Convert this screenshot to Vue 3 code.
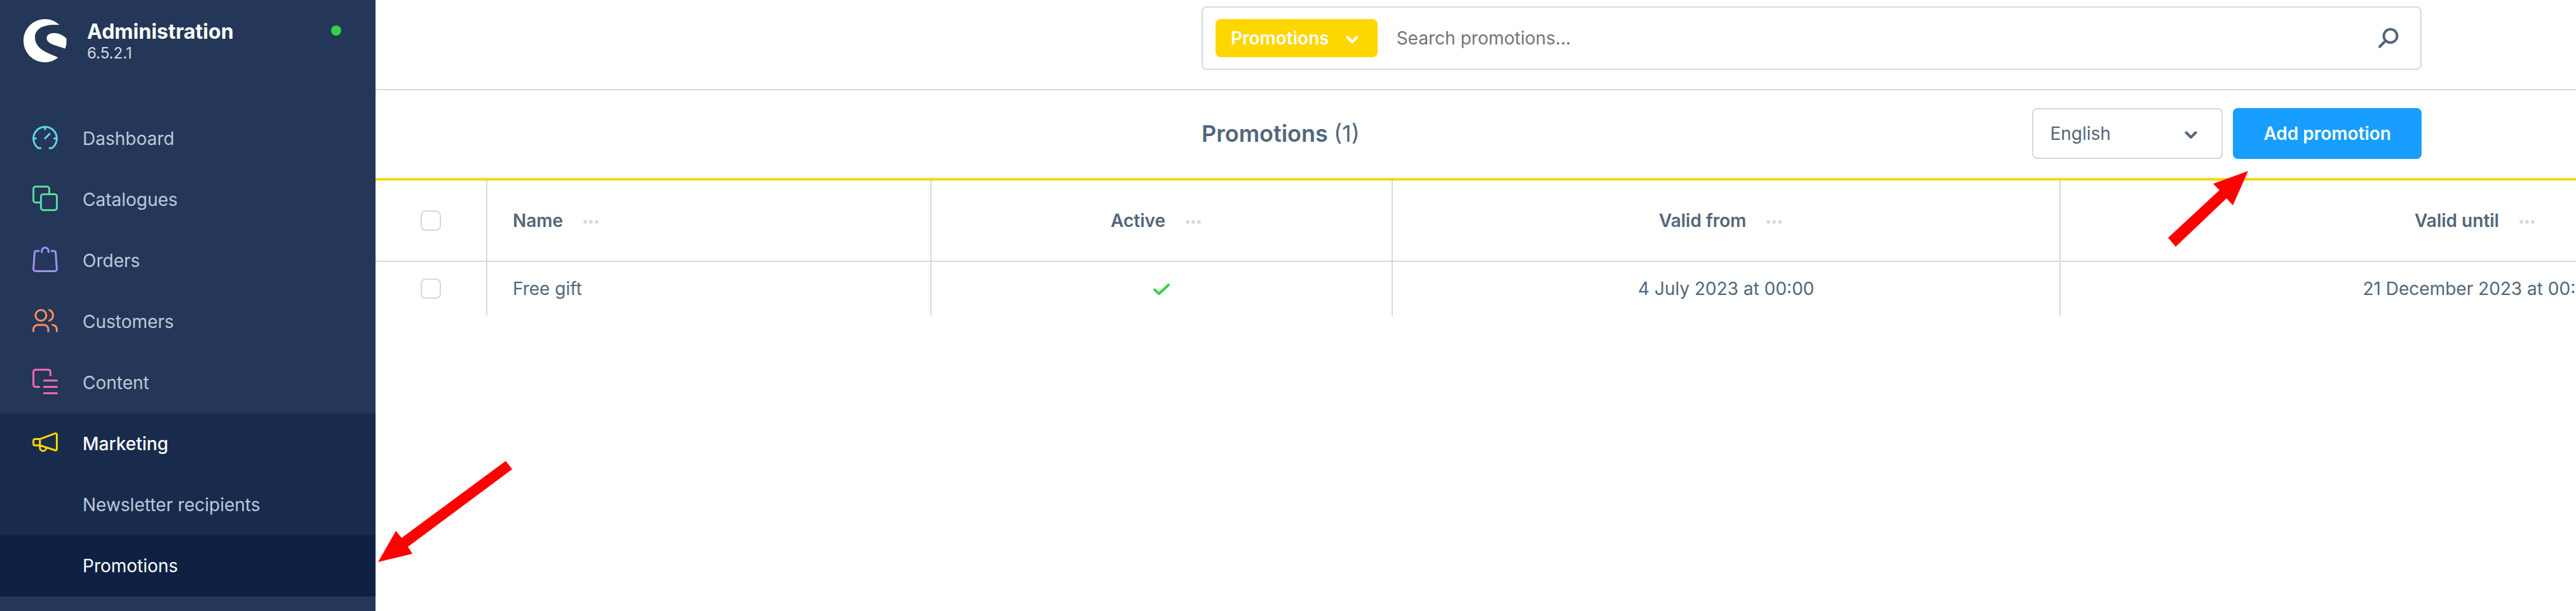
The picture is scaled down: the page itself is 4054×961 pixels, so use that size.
<script setup>
const nav = [
  { id: 'dashboard', label: 'Dashboard' },
  { id: 'catalogues', label: 'Catalogues' },
  { id: 'orders', label: 'Orders' },
  { id: 'customers', label: 'Customers' },
  { id: 'content', label: 'Content' },
]
const columns = [
  { id: 'name', label: 'Name' },
  { id: 'active', label: 'Active' },
  { id: 'from', label: 'Valid from' },
  { id: 'until', label: 'Valid until' },
]
const rows = [
  { name: 'Free gift', from: '4 July 2023 at 00:00', until: '21 December 2023 at 00:00' },
]
</script>

<template>
  <div class="app">
    <aside class="sidebar">
      <header class="brand">
        <svg class="logo" viewBox="0 0 68 68" aria-hidden="true">
          <path fill="#fff" d="M56.500 9.300C50 3 42 0 34 0C15 0 0 15 0 34C0 53 15 68 34 68C42 68 49 65 54.500 60.500C42 54 18 49 18 28.500C18 15 32 7 56.500 9.300Z" />
          <path fill="#fff" d="M67.500 30.500C62 25 55 22 48 22C41 22 36.500 25 36.500 30C36.500 39 50 41 65.500 46.500C67.500 42 68 36 67.500 30.500Z" />
        </svg>
        <div class="brand-text">
          <span class="brand-name">Administration</span>
          <span class="brand-version">6.5.2.1</span>
        </div>
        <span class="status"></span>
      </header>

      <nav class="nav">
        <a v-for="item in nav" :key="item.id" class="nav-item" href="#">
          <svg class="nav-icon" :class="item.id" viewBox="0 0 40 40" aria-hidden="true">
            <template v-if="item.id === 'dashboard'">
              <path d="M13 37H9.500A18.400 18.400 0 1 1 30.500 37H27M20 3.500V7.500M2 21.700H5.500M38 21.700H34.500M20 21.500L27 14.500" />
            </template>
            <template v-else-if="item.id === 'catalogues'">
              <path d="M13 26.500H5A3.400 3.400 0 0 1 1.600 23V5A3.400 3.400 0 0 1 5 1.600H23A3.400 3.400 0 0 1 26.500 5V13" />
              <rect x="13.500" y="13.500" width="25" height="25" rx="3.400" />
            </template>
            <template v-else-if="item.id === 'orders'">
              <path d="M10 6.800H6.500A3 3 0 0 0 3.400 9.500L1.600 35A3.300 3.300 0 0 0 5 38.400H35A3.300 3.300 0 0 0 38.400 35L36.600 9.500A3 3 0 0 0 33.500 6.800H30M14.800 8.500V6.500A5 5 0 0 1 19.500 1.600H20.500A5 5 0 0 1 25.200 6.500V8.500" />
            </template>
            <template v-else-if="item.id === 'customers'">
              <circle cx="13.400" cy="12" r="8.500" />
              <path d="M26.600 3.600A9 9 0 0 1 26.600 20.400M1.600 37V34A7 7 0 0 1 8.500 27H18A7 7 0 0 1 25 34V37M31.500 27A7 7 0 0 1 38.400 34V37" />
            </template>
            <template v-else>
              <path d="M10.500 28.400H5A3.400 3.400 0 0 1 1.600 25V5A3.400 3.400 0 0 1 5 1.600H25A3.400 3.400 0 0 1 28.400 5V10.500M18.500 18.400H38.400M18.500 28.400H38.400M18.500 38.400H38.400" />
            </template>
          </svg>
          <span>{{ item.label }}</span>
        </a>
        <div class="nav-group">
          <a class="nav-item open" href="#">
            <svg class="nav-icon marketing" viewBox="0 0 40 40" aria-hidden="true">
              <path d="M11.800 14.600L36 5.700A1.800 1.800 0 0 1 38.400 7.400V30.600A1.800 1.800 0 0 1 36 32.300L11.800 24.400ZM11.800 14.600H4A2.400 2.400 0 0 0 1.600 17V22A2.400 2.400 0 0 0 4 24.400H11.800M11.800 25V28A5 5 0 0 0 21.800 28.500" />
            </svg>
            <span>Marketing</span>
          </a>
          <a class="nav-item sub" href="#">Newsletter recipients</a>
          <a class="nav-item sub current" href="#">Promotions</a>
        </div>
      </nav>
    </aside>

    <main class="main">
      <header class="topbar band">
        <div class="search">
          <button class="search-type" type="button">
            Promotions
            <svg class="chevron" viewBox="0 0 20 12" aria-hidden="true"><path d="M2.500 2.500L10 10L17.500 2.500" /></svg>
          </button>
          <input class="search-input" type="text" placeholder="Search promotions..." aria-label="Search promotions" />
          <button class="search-go" type="button" aria-label="Search">
            <svg viewBox="0 0 32 32" aria-hidden="true"><circle cx="19" cy="12.500" r="10.500" /><path d="M11.500 20L2 29.500" /></svg>
          </button>
        </div>
      </header>

      <section class="toolbar band">
        <div class="toolbar-inner">
          <h1 class="title">Promotions <span>(1)</span></h1>
          <div class="select-wrap">
            <select class="select" aria-label="Language">
              <option>English</option>
            </select>
            <svg class="chevron select-chevron" viewBox="0 0 20 12" aria-hidden="true"><path d="M2.500 2.500L10 10L17.500 2.500" /></svg>
          </div>
          <button class="primary" type="button">Add promotion</button>
        </div>
      </section>

      <div class="grid-scroll">
        <table class="grid">
          <colgroup>
            <col class="c-check" />
            <col v-for="c in columns" :key="c.id" :class="'c-' + c.id" />
          </colgroup>
          <thead>
            <tr>
              <th><input class="check" type="checkbox" aria-label="Select all" /></th>
              <th v-for="c in columns" :key="c.id" :class="c.id">
                <span class="th-content">
                  {{ c.label }}
                  <button class="more" type="button" :aria-label="c.label + ' options'">
                    <svg viewBox="0 0 24 6" aria-hidden="true"><circle cx="3" cy="3" r="2.800" /><circle cx="12" cy="3" r="2.800" /><circle cx="21" cy="3" r="2.800" /></svg>
                  </button>
                </span>
              </th>
            </tr>
          </thead>
          <tbody>
            <tr v-for="r in rows" :key="r.name">
              <td><input class="check" type="checkbox" :aria-label="'Select ' + r.name" /></td>
              <td class="name">{{ r.name }}</td>
              <td>
                <svg class="tick" viewBox="0 0 26 18" role="img" aria-label="Active"><path d="M2 9.500L9 16L24 2" /></svg>
              </td>
              <td>{{ r.from }}</td>
              <td>{{ r.until }}</td>
            </tr>
          </tbody>
        </table>
      </div>
    </main>

    <svg class="arrow arrow-menu" viewBox="0 0 212 160" aria-hidden="true">
      <path d="M0 160L28 111L37 122L201 1L211 14L47 136L54 147Z" />
    </svg>
    <svg class="arrow arrow-add" viewBox="0 0 126 120" aria-hidden="true">
      <path d="M126 1L71 21L81 31L0 106L12 120L92 44L102 55Z" />
    </svg>
  </div>
</template>

<style>
body {
  margin: 0;
}
</style>

<style scoped>
.app {
  position: relative;
  display: grid;
  grid-template-columns: 591px minmax(0, 1fr);
  min-height: 100vh;
  overflow: hidden;
  background: #fff;
  color: #52667a;
  font-family: Inter, "Liberation Sans", sans-serif;
  font-size: 28px;
  line-height: 40px;
}
.app * {
  box-sizing: border-box;
}
button,
input,
select {
  margin: 0;
  padding: 0;
  border: 0;
  background: none;
  color: inherit;
  font: inherit;
}
svg {
  display: block;
  flex: none;
}

/* Sidebar */
.sidebar {
  background: #243758;
}
.brand {
  display: flex;
  align-items: flex-start;
  height: 170px;
  padding: 30px 54px 0 37px;
}
.logo {
  width: 68px;
  height: 68px;
}
.brand-text {
  flex: 1;
  margin-left: 32px;
  color: #fff;
}
.brand-name {
  display: block;
  font-size: 32px;
  font-weight: 700;
}
.brand-version {
  display: block;
  color: #d1d9e0;
  font-size: 24px;
  line-height: 28px;
}
.status {
  width: 16px;
  height: 16px;
  margin-top: 10px;
  border-radius: 50%;
  background: #37d046;
}
.nav-item {
  display: flex;
  align-items: center;
  gap: 39px;
  height: 96px;
  padding-left: 51px;
  color: #bec8db;
  text-decoration: none;
}
.nav-icon {
  width: 40px;
  height: 40px;
  margin-bottom: 4px;
  overflow: visible;
}
.nav-icon,
.chevron,
.search-go svg,
.tick {
  fill: none;
  stroke: currentColor;
  stroke-width: 3;
  stroke-linecap: round;
  stroke-linejoin: round;
}
.dashboard { color: #64d4ed; }
.catalogues { color: #57d9a3; }
.orders { color: #a092f0; }
.customers { color: #ff8e64; }
.content { color: #ff68b4; }
.marketing { color: #ffd700; }
.nav-group {
  background: #182b4d;
}
.open {
  color: #fff;
  font-weight: 500;
}
.sub {
  padding-left: 130px;
}
.current {
  background: #0e2143;
  color: #fff;
}

/* Header */
.band {
  display: grid;
  grid-template-columns: minmax(0, 1300fr) minmax(0, 1920px) minmax(0, 243fr);
}
.topbar {
  padding: 10px 0 30px;
  border-bottom: 2px solid #d1d9e0;
}
.search {
  grid-column: 2;
  display: flex;
  align-items: center;
  height: 100px;
  padding: 0 34px 0 20px;
  border: 2px solid #d1d9e0;
  border-radius: 8px;
}
.search-type {
  display: flex;
  align-items: center;
  gap: 26px;
  height: 60px;
  padding: 0 30px 0 24px;
  border-radius: 8px;
  background: #ffd700;
  color: #fff;
  font-weight: 600;
}
.chevron {
  width: 20px;
  height: 12px;
  margin-top: 4px;
  stroke-width: 4;
}
.search-input {
  flex: 1;
  min-width: 0;
  margin-left: 30px;
  outline: 0;
}
.search-input::placeholder {
  color: #757575;
  opacity: 1;
}
.search-go svg {
  width: 32px;
  height: 32px;
  stroke-width: 4;
}
.toolbar {
  padding: 28px 0 30px;
  border-bottom: 4px solid #ffd700;
}
.toolbar-inner {
  grid-column: 2;
  display: flex;
  align-items: center;
  height: 80px;
}
.title {
  flex: 1;
  margin: 0;
  font-size: 36px;
  font-weight: 600;
}
.title span {
  font-weight: 400;
}
.select-wrap {
  position: relative;
  width: 300px;
  height: 80px;
  margin-right: 16px;
}
.select {
  width: 100%;
  height: 100%;
  padding: 0 60px 0 26px;
  border: 2px solid #d1d9e0;
  border-radius: 8px;
  background: #fff;
  appearance: none;
}
.select-chevron {
  position: absolute;
  top: 32px;
  right: 40px;
  pointer-events: none;
}
.primary {
  height: 80px;
  padding: 0 48px;
  border-radius: 8px;
  background: #189eff;
  color: #fff;
  font-weight: 600;
}

/* Data grid */
.grid-scroll {
  overflow: hidden;
}
.grid {
  width: 3975px;
  table-layout: fixed;
  border-collapse: separate;
  border-spacing: 0;
}
.c-check { width: 176px; }
.c-name { width: 699px; }
.c-active { width: 726px; }
.c-from { width: 1051px; }
.c-until { width: 1323px; }
th,
td {
  padding: 0 40px;
  border-right: 2px solid #d1d9e0;
  text-align: center;
}
th {
  height: 128px;
  border-bottom: 2px solid #d1d9e0;
  font-weight: 600;
}
td {
  height: 84px;
}
.name {
  text-align: left;
}
.th-content {
  display: inline-flex;
  align-items: center;
  gap: 32px;
  padding-right: 18px;
}
.more svg {
  width: 24px;
  height: 6px;
  margin-top: 4px;
  fill: #d1d9e0;
}
.check {
  display: block;
  width: 32px;
  height: 32px;
  margin: 0 auto;
  border: 2px solid #d1d9e0;
  border-radius: 8px;
  background: #fff;
  appearance: none;
}
.tick {
  width: 26px;
  height: 18px;
  margin: 2px auto 0;
  color: #37d046;
  stroke-width: 4;
}

/* Callout arrows lying over the page */
.arrow {
  position: absolute;
  fill: #f00;
}
.arrow-menu {
  top: 724px;
  left: 595px;
  width: 212px;
  height: 160px;
}
.arrow-add {
  top: 268px;
  left: 3412px;
  width: 126px;
  height: 120px;
}
</style>
